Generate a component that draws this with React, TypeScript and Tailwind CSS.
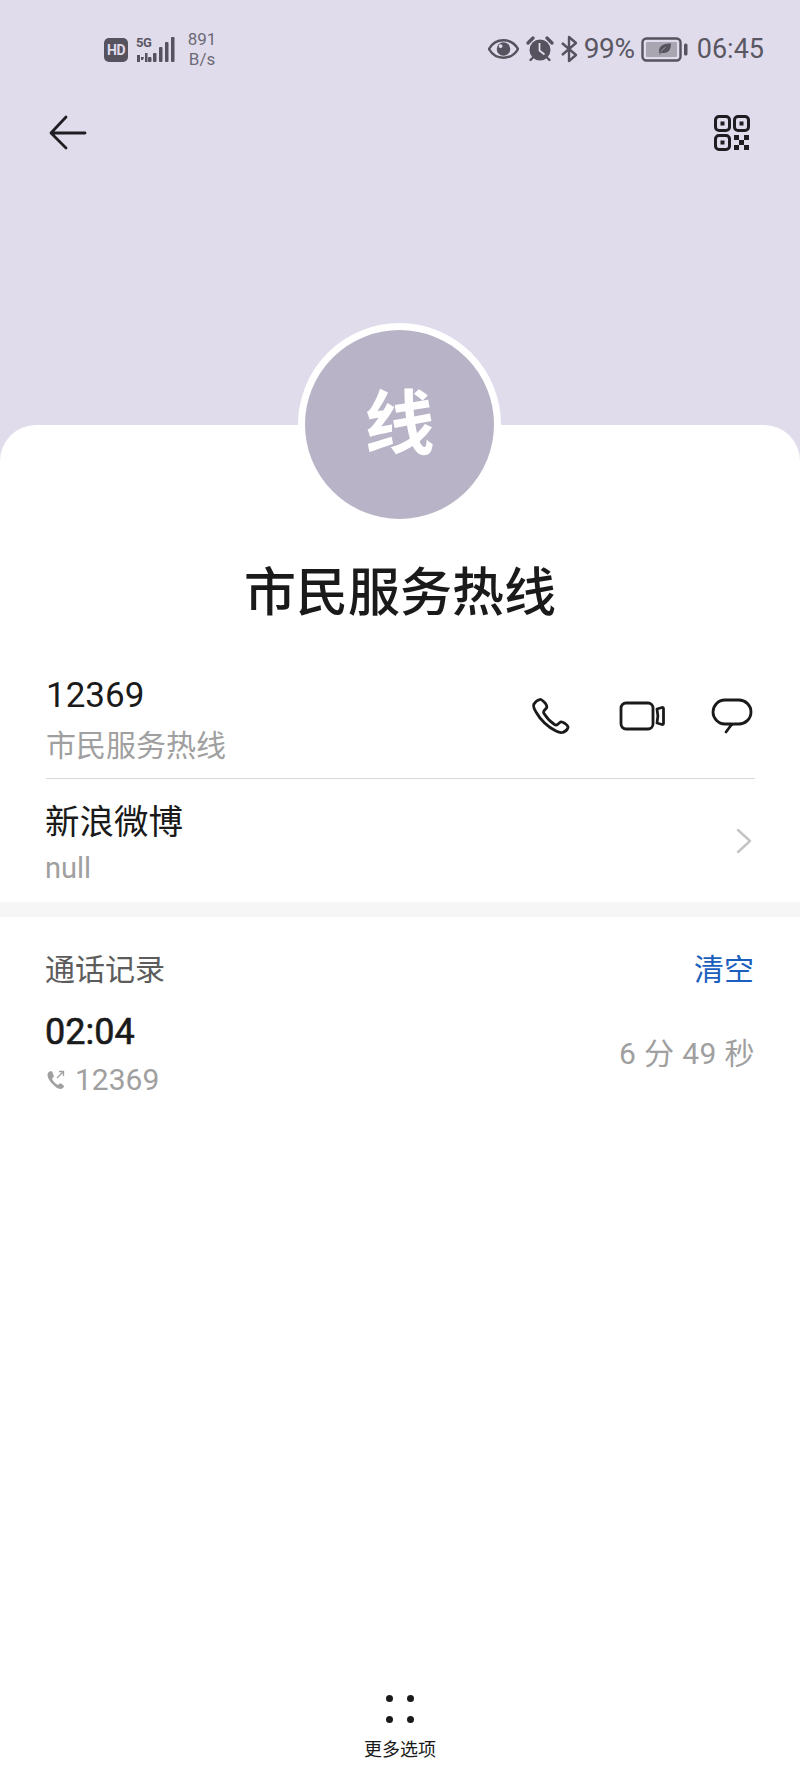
const font = "[font-family:Roboto,'Noto_Sans_CJK_SC',sans-serif]";

function StatusBar() {
  return (
    <div className="flex h-[74px] items-start justify-between pl-[104px] pr-[36px] pt-[31px] text-[#5a5763]">
      {/* Left: network */}
      <div className="flex items-center">
        <div className="flex h-[24px] w-[24px] items-center justify-center rounded-[5px] bg-[#56535f] text-[14px] font-bold leading-none tracking-[-0.5px] text-[#e0dcec]">
          HD
        </div>
        <div className="relative ml-[8px] h-[26px] w-[40px]">
          <span className="absolute left-[0px] top-[-1px] text-[13px] font-bold leading-[13px] tracking-[-0.5px]">5G</span>
          <svg width="40" height="26" viewBox="0 0 40 26" fill="#56535f">
            <path d="M1 18h3v7H1zM5 20h3l-1 3H5zM9 16h2.500v9H9z" />
            <rect x="12" y="20" width="3.500" height="5" rx="1" />
            <rect x="17" y="16" width="3.500" height="9" rx="1" />
            <rect x="23" y="10" width="3.500" height="15" rx="1" />
            <rect x="29" y="5" width="3.500" height="20" rx="1" />
            <rect x="35" y="0" width="3.500" height="25" rx="1" />
          </svg>
        </div>
        <div className="ml-[11px] mt-[-2px] flex w-[30px] flex-col items-center text-[17px] leading-[20px] text-[#6d6a76]">
          <span>891</span>
          <span>B/s</span>
        </div>
      </div>

      {/* Right: status */}
      <div className="mt-[-2px] flex translate-y-[6px] items-center">
        <svg width="31" height="22" viewBox="0 0 32 22">
          <path d="M1 11C5 4 10 2 16 2s11 2 15 9c-4 7-9 9-15 9S5 18 1 11Z" fill="none" stroke="#56535f" strokeWidth="2.600" />
          <circle cx="16" cy="11" r="7" fill="#56535f" />
          <circle cx="13" cy="8" r="2" fill="#e0dcec" />
        </svg>
        <svg className="ml-[7px]" width="28" height="28" viewBox="0 0 28 28">
          <circle cx="14" cy="15" r="10.500" fill="#56535f" />
          <path d="M2 8l5-5M26 8l-5-5" stroke="#56535f" strokeWidth="3.200" strokeLinecap="round" />
          <path d="M4.500 25l2-2M23.500 25l-2-2" stroke="#56535f" strokeWidth="2.400" strokeLinecap="round" />
          <path d="M13.500 8v7.500l5 4" fill="none" stroke="#e0dcec" strokeWidth="1.800" />
        </svg>
        <svg className="ml-[6px]" width="18" height="28" viewBox="0 0 18 28">
          <path d="M2 8l14 12-7 6V2l7 6L2 20" fill="none" stroke="#56535f" strokeWidth="2.400" strokeLinejoin="round" />
        </svg>
        <span className="ml-[6px] text-[28px] leading-none tracking-[-0.3px]">99%</span>
        <svg className="ml-[6px]" width="47" height="25" viewBox="0 0 47 25">
          <rect x="1.500" y="1.500" width="38" height="22" rx="4" fill="none" stroke="#56535f" strokeWidth="2.400" />
          <rect x="5" y="5" width="31" height="15" rx="1" fill="#a9a6b1" />
          <path d="M30 6.500c-8 0-12 2.500-12 7.500 0 1 .3 2 .8 2.500C21 12 24 10 26 9.500c-3 2-6 5-8 8.500 1-.5 2-1.300 2.600-2.200C27 17 30 13 30 6.500Z" fill="#56535f" />
          <rect x="43" y="6.500" width="3.500" height="12" rx="1.500" fill="#56535f" />
        </svg>
        <span className="ml-[9px] text-[27px] leading-none">06:45</span>
      </div>
    </div>
  );
}

export default function App() {
  return (
    <div className={`flex h-[1778px] w-[800px] flex-col overflow-hidden bg-white ${font}`}>
      {/* Purple header */}
      <div className="h-[470px] bg-[#e0dcec]">
        <StatusBar />
        <div className="flex items-center justify-between pl-[49px] pr-[50px] pt-[41px]">
          <svg width="38" height="36" viewBox="0 0 38 36" fill="none" stroke="#1d1d22" strokeWidth="2.800" strokeLinecap="round" strokeLinejoin="round">
            <path d="M2 18h34M17 2 2 18l15 15" />
          </svg>
          <svg width="36" height="36" viewBox="0 0 36 36" fill="none">
            <rect x="1.500" y="1.500" width="14" height="14" rx="3.500" stroke="#1d1d22" strokeWidth="3" />
            <rect x="20.500" y="1.500" width="14" height="14" rx="3.500" stroke="#1d1d22" strokeWidth="3" />
            <rect x="1.500" y="20.500" width="14" height="14" rx="3.500" stroke="#1d1d22" strokeWidth="3" />
            <rect x="6.500" y="6.500" width="4" height="4" fill="#1d1d22" />
            <rect x="25.500" y="6.500" width="4" height="4" fill="#1d1d22" />
            <rect x="6.500" y="25.500" width="4" height="4" fill="#1d1d22" />
            <path d="M20 20h5v5h-5zM30 20h5v5h-5zM25 25h5v5h-5zM20 30h5v5h-5zM30 30h5v5h-5z" fill="#1d1d22" />
          </svg>
        </div>
      </div>

      {/* White sheet */}
      <div className="mt-[-45px] flex flex-1 flex-col rounded-t-[36px] bg-white">
        <div className="ml-[298px] mt-[-102px] flex h-[203px] w-[203px] items-center justify-center rounded-full border-[7px] border-white bg-[#b8b3c6] text-[70px] font-bold leading-none text-white">
          线
        </div>

        <h1 className="mt-[36px] text-center text-[52px] font-medium leading-[64px] text-[#1a1a1a]">市民服务热线</h1>

        {/* Phone row */}
        <div className="mt-[48px] flex items-start justify-between pl-[46px] pr-[47px]">
          <div>
            <div className="text-[35px] leading-[44px] text-[#1a1a1a]">12369</div>
            <div className="mt-[6px] text-[30px] leading-[44px] text-[#a0a0a0]">市民服务热线</div>
          </div>
          <div className="mt-[23px] flex items-center">
            <svg width="40" height="38" viewBox="0 0 40 38" fill="none" stroke="#1a1a1a" strokeWidth="2.800" strokeLinejoin="round">
              <path d="M9 2.500c-2 .5-5 2.500-6 4.500-1 2 0 5 2 8 4 7 12 15 20 19 2.500 1.300 5 2 7 1.300 2.500-.8 4.500-3 5-5 .2-1-1-2.300-3-3.800-2-1.300-3.500-2-4.500-1.500l-3 2.500c-1 .7-2 .6-3 0-3-2-8-7-10.500-11-.6-1-.5-2 .2-3l2.300-2.500c.7-1 .3-2.500-1-4.500C12 4 10.300 2.200 9 2.500Z" />
            </svg>
            <svg className="ml-[48px]" width="46" height="30" viewBox="0 0 46 30" fill="none" stroke="#1a1a1a" strokeWidth="2.800" strokeLinejoin="round">
              <rect x="2" y="2" width="32" height="26" rx="5" />
              <path d="M38 8l5-1.500c1 0 1.500.5 1.500 1.500v14c0 1-.5 1.500-1.500 1.500L38 22c1-4 1-10 0-14Z" />
            </svg>
            <svg className="ml-[46px]" width="42" height="36" viewBox="0 0 42 36" fill="none" stroke="#1a1a1a" strokeWidth="2.800" strokeLinejoin="round" strokeLinecap="round">
              <path d="M21 26h-7C7 26 2 20 2 14S7 2 14 2h14c6 0 12 5 12 12s-6 12-12 12h-5c-1.500 0-2.500.5-3.500 2L15 34" />
            </svg>
          </div>
        </div>

        <div className="ml-[46px] mr-[45px] mt-[10px] h-px bg-[#d9d9d9]" />

        {/* Weibo row */}
        <div className="flex items-center justify-between pl-[45px] pr-[48px] pt-[21px]">
          <div>
            <div className="text-[34.500px] leading-[44px] text-[#1a1a1a]">新浪微博</div>
            <div className="mt-[2px] text-[29px] leading-[44px] text-[#a0a0a0]">null</div>
          </div>
          <svg className="mt-[-9px]" width="16" height="26" viewBox="0 0 16 26" fill="none" stroke="#c4c4c4" strokeWidth="2.400" strokeLinecap="round" strokeLinejoin="round">
            <path d="M2 2l12 11L2 24" />
          </svg>
        </div>

        <div className="mt-[12px] h-[15px] bg-[#f6f6f6]" />

        {/* Call log */}
        <div className="flex items-center justify-between pl-[45px] pr-[46px] pt-[31px]">
          <span className="text-[30px] leading-[44px] text-[#5c5c5c]">通话记录</span>
          <span className="text-[30px] leading-[44px] text-[#1b5fbe]">清空</span>
        </div>
        <div className="flex items-center justify-between pl-[45px] pr-[45px] pt-[18px]">
          <div>
            <div className="text-[36px] leading-[44px] text-[#1a1a1a] [-webkit-text-stroke:0.6px_#1a1a1a]">02:04</div>
            <div className="ml-[1px] mt-[4px] flex items-center">
              <svg width="20" height="22" viewBox="0 0 20 22" fill="none">
                <path d="M5 2c-2 .3-3.500 2-3.500 4 0 3 2.500 6.500 5 9s5 5 8 5c1.500 0 3-1 3.500-2.500 0-1-2.500-3-4-3.200l-2 1.700C9 14.500 6.500 11.500 6 9.500L7.800 8C8 6.500 6.500 2 5 2Z" fill="#a0a0a0" />
                <path d="M11 9l6-6M13 2.500h4.500V7" stroke="#a0a0a0" strokeWidth="1.300" />
              </svg>
              <span className="ml-[9px] text-[30px] leading-[44px] text-[#a0a0a0]">12369</span>
            </div>
          </div>
          <span className="mb-[4px] text-[30px] leading-[44px] tracking-[0.4px] text-[#a0a0a0]">6 分 49 秒</span>
        </div>

        {/* More options */}
        <div className="mt-auto flex flex-col items-center pb-[15px]">
          <div className="grid grid-cols-2 gap-x-[14px] gap-y-[14px]">
            <span className="h-[7px] w-[7px] rounded-full bg-[#1a1a1a]" />
            <span className="h-[7px] w-[7px] rounded-full bg-[#1a1a1a]" />
            <span className="h-[7px] w-[7px] rounded-full bg-[#1a1a1a]" />
            <span className="h-[7px] w-[7px] rounded-full bg-[#1a1a1a]" />
          </div>
          <span className="mt-[14px] text-[18px] leading-[26px] text-[#1a1a1a]">更多选项</span>
        </div>
      </div>
    </div>
  );
}
